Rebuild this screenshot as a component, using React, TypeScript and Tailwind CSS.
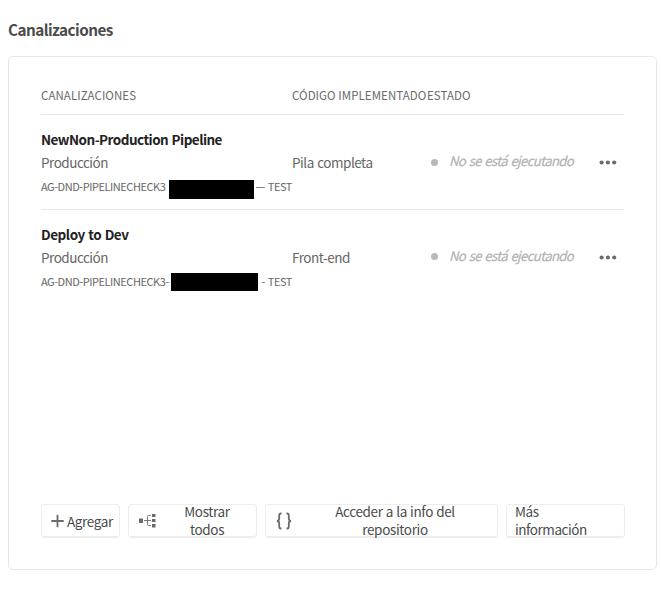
import React from 'react';

type Pipeline = {
  name: string;
  nameClass: string;
  branch: string;
  branchClass: string;
  maskClass: string;
  dash: string;
  code: string;
  dotClass: string;
};

const pipelines: Pipeline[] = [
  {
    name: 'NewNon-Production Pipeline',
    nameClass: 'tracking-[-0.52px]',
    branch: 'AG-DND-PIPELINECHECK3',
    branchClass: 'w-[128px]',
    maskClass: 'h-[19px] w-[85px] mt-[5px]',
    dash: '—',
    code: 'Pila completa',
    dotClass: 'mt-[44px]',
  },
  {
    name: 'Deploy to Dev',
    nameClass: 'tracking-[-0.45px]',
    branch: 'AG-DND-PIPELINECHECK3-',
    branchClass: 'w-[130px]',
    maskClass: 'h-[18px] w-[87px] mt-[3px]',
    dash: '-',
    code: 'Front-end',
    dotClass: 'mt-[43px]',
  },
];

function PipelineRow({ p }: { p: Pipeline }) {
  return (
    <div className="flex h-[95px] border-t border-[#e6e6e6]">
      <div className="w-[251px] shrink-0 whitespace-nowrap pt-[13px]">
        <div className={`h-[23px] text-[13.5px] font-bold leading-[22px] text-[#222] [word-spacing:0.8px] ${p.nameClass}`}>{p.name}</div>
        <div className="h-[24px] text-[13.5px] leading-[22px] tracking-[-0.5px] text-[#666]">Producción</div>
        <div className="flex h-[24px] text-[11px] leading-[22px] tracking-[-0.45px] text-[#666]">
          <span className={p.branchClass}>{p.branch}</span>
          <span className={`bg-black ${p.maskClass}`} />
          <span className="ml-auto [word-spacing:1px]">{p.dash} TEST</span>
        </div>
      </div>
      <div className="w-[139px] shrink-0 pt-[36px] text-[13.5px] leading-[22px] tracking-[-0.47px] text-[#666] [word-spacing:0.8px]">{p.code}</div>
      <div className={`size-[7px] shrink-0 rounded-full bg-[#b9b9b9] ${p.dotClass}`} />
      <div className="ml-[11px] w-[150px] shrink-0 whitespace-nowrap pt-[35px] text-[13.2px] italic leading-[22px] tracking-[-0.66px] text-[#b2b2b2] [-webkit-text-stroke:0.2px_#b2b2b2] [word-spacing:1.2px]">
        No se está ejecutando
      </div>
      <svg className="mt-[45px] shrink-0" width="19" height="5" viewBox="0 0 19 5" fill="#6b6b6b">
        <circle cx="2.6" cy="2.5" r="2.1" />
        <circle cx="8.9" cy="2.5" r="2.1" />
        <circle cx="15.2" cy="2.5" r="2.1" />
      </svg>
    </div>
  );
}

const buttonClass =
  'flex h-[34px] shrink-0 items-center rounded-[4px] border border-b-2 border-[#ededed] text-[13.5px] leading-[18px] tracking-[-0.35px] text-[#4b4b4b]';

export default function App() {
  return (
    <main className="h-[605px] w-[662px] overflow-hidden bg-white pl-[8px] font-['Noto_Sans_CJK_SC','Noto_Sans',sans-serif]">
      <h1 className="h-[56px] pt-[17px] text-[15.3px] font-bold leading-[24px] tracking-[-0.55px] text-[#4b4b4b]">Canalizaciones</h1>
      <section className="flex h-[514px] w-[649px] flex-col rounded-[5px] border border-[#e6e6e6] pl-[32px] pr-[32px]">
        <div className="flex h-[57px] whitespace-nowrap pt-[27px] text-[11.5px] leading-[22px] tracking-[0.07px] text-[#6b6b6b]">
          <span className="w-[251px]">CANALIZACIONES</span>
          <span className="w-[135px]">CÓDIGO IMPLEMENTADO</span>
          <span>ESTADO</span>
        </div>
        {pipelines.map((p) => (
          <PipelineRow key={p.name} p={p} />
        ))}
        <div className="mt-auto mb-[31px] flex">
          <button className={`${buttonClass} w-[79px] pl-[9px]`}>
            <svg className="mr-[3px] shrink-0" width="13" height="14" viewBox="0 0 13 14" stroke="#6b6b6b" strokeWidth="1.8">
              <path d="M6.5 .8V13.2M.3 7H12.7" />
            </svg>
            <span>Agregar</span>
          </button>
          <button className={`${buttonClass} ml-[8px] w-[129px] pl-[9px]`}>
            <svg className="shrink-0" width="19" height="15" viewBox="0 0 19 15" fill="#6b6b6b">
              <path d="M1 5.5h4v4.5H1zM14 1h3.5v3H14zM14 6h3.5v3H14zM14 11h3.5v3.5H14z" />
              <path d="M6 7.5H13M12.8 2.5H10.5Q9.5 2.5 9.5 3.5V11.5Q9.5 12.5 10.5 12.5H12.8" fill="none" stroke="#777" />
            </svg>
            <span className="-mt-px ml-[17px] w-[66px] text-center">Mostrar todos</span>
          </button>
          <button className={`${buttonClass} ml-[8px] w-[233px] pl-[9px]`}>
            <svg className="shrink-0" width="18" height="18" viewBox="0 0 18 18" fill="none" stroke="#6b6b6b" strokeWidth="1.8">
              <path d="M6.5 1.5H5.8Q4.2 1.5 4.2 3.5V6.8Q4.2 8.7 2 9Q4.2 9.3 4.2 11.2V14.5Q4.2 16.5 5.8 16.5H6.5M11.5 1.5H12.2Q13.8 1.5 13.8 3.5V6.8Q13.8 8.7 16 9Q13.8 9.3 13.8 11.2V14.5Q13.8 16.5 12.2 16.5H11.5" />
            </svg>
            <span className="-mt-px ml-[37px] w-[130px] text-center [word-spacing:0.5px]">Acceder a la info del repositorio</span>
          </button>
          <button className={`${buttonClass} ml-[8px] w-[119px] pl-[8px]`}>
            <span className="-mt-px w-[76px] text-left tracking-[-0.45px]">Más información</span>
          </button>
        </div>
      </section>
    </main>
  );
}
